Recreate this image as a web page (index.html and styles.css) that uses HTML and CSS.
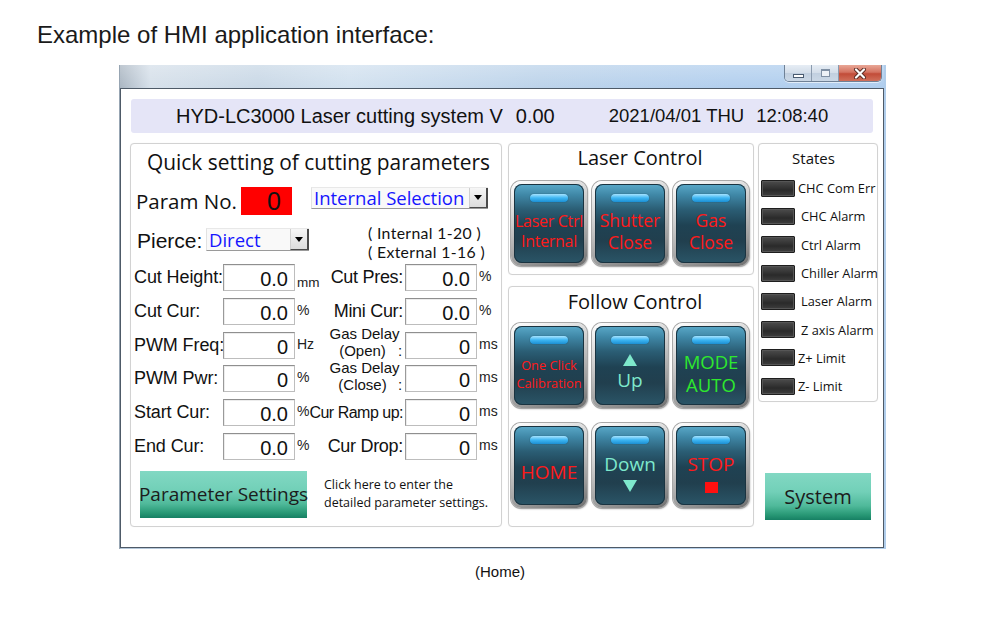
FILE: index.html
```html
<!DOCTYPE html>
<html>
<head>
<meta charset="utf-8">
<title>HMI</title>
<link rel="stylesheet" href="styles.css">
</head>
<body>
<h1 class="page-title">Example of HMI application interface:</h1>
<div class="window">
  <div class="titlebar">
    <div class="wctrls">
      <span class="wbtn wmin"><i></i></span>
      <span class="wbtn wmax"><i></i></span>
      <span class="wbtn wclose"><svg width="14" height="11" viewBox="0 0 14 11"><path d="M3 1.5 L11 9.5 M11 1.5 L3 9.5" stroke="#5a2a22" stroke-width="4" stroke-linecap="round"/><path d="M3 1.5 L11 9.5 M11 1.5 L3 9.5" stroke="#ffffff" stroke-width="2.2" stroke-linecap="round"/></svg></span>
    </div>
  </div>
  <div class="client">
    <div class="header">
      <span class="h-title">HYD-LC3000 Laser cutting system V</span>
      <span class="h-ver">0.00</span>
      <span class="h-date">2021/04/01 THU</span>
      <span class="h-time">12:08:40</span>
    </div>
    <div class="main">
      <section class="panel quick">
        <div class="q-title">Quick setting of cutting parameters</div>
        <div class="q-param">
          <span class="q-plabel">Param No.</span>
          <span class="redbox">0</span>
          <span class="combo combo-sel"><span class="combo-text">Internal Selection</span><span class="combo-btn"><i></i></span></span>
        </div>
        <div class="q-pierce">
          <span class="pierce-label">Pierce:</span>
          <span class="combo combo-direct"><span class="combo-text">Direct</span><span class="combo-btn"><i></i></span></span>
          <span class="range"><span class="rline">( Internal 1-20 )</span><span class="rline">( External 1-16 )</span></span>
        </div>
        <div class="q-grid">
          <span class="lbl">Cut Height:</span><span class="val">0.0</span><span class="unit unit-low">mm</span>
          <span class="lbl2"><span>Cut Pres:</span></span><span class="val">0.0</span><span class="unit">%</span>

          <span class="lbl">Cut Cur:</span><span class="val">0.0</span><span class="unit">%</span>
          <span class="lbl2"><span>Mini Cur:</span></span><span class="val">0.0</span><span class="unit">%</span>

          <span class="lbl">PWM Freq:</span><span class="val">0</span><span class="unit">Hz</span>
          <span class="lbl2 two"><span class="l1">Gas Delay</span><span class="l2"><span class="sub">(Open)</span><span class="colon">:</span></span></span><span class="val">0</span><span class="unit">ms</span>

          <span class="lbl">PWM Pwr:</span><span class="val">0</span><span class="unit">%</span>
          <span class="lbl2 two"><span class="l1">Gas Delay</span><span class="l2"><span class="sub">(Close)</span><span class="colon">:</span></span></span><span class="val">0</span><span class="unit">ms</span>

          <span class="lbl">Start Cur:</span><span class="val">0.0</span><span class="unit">%</span>
          <span class="lbl2 tight"><span>Cur Ramp up:</span></span><span class="val">0</span><span class="unit">ms</span>

          <span class="lbl">End Cur:</span><span class="val">0.0</span><span class="unit">%</span>
          <span class="lbl2"><span>Cur Drop:</span></span><span class="val">0</span><span class="unit">ms</span>
        </div>
        <div class="q-bottom">
          <div class="gbtn param-btn">Parameter Settings</div>
          <p class="hint">Click here to enter the<br>detailed parameter settings.</p>
        </div>
      </section>

      <div class="mid">
        <section class="panel laser">
          <div class="ptitle laser-title">Laser Control</div>
          <div class="btnrow">
            <div class="hbtn"><div class="face"><span class="pill"></span><span class="btxt red t16"><span>Laser Ctrl</span><span>Internal</span></span></div></div>
            <div class="hbtn"><div class="face"><span class="pill"></span><span class="btxt red t17"><span>Shutter</span><span>Close</span></span></div></div>
            <div class="hbtn"><div class="face"><span class="pill"></span><span class="btxt red t17"><span>Gas</span><span>Close</span></span></div></div>
          </div>
        </section>
        <section class="panel follow">
          <div class="ptitle follow-title">Follow Control</div>
          <div class="btnrow">
            <div class="hbtn"><div class="face"><span class="pill"></span><span class="btxt red t12"><span>One Click</span><span>Calibration</span></span></div></div>
            <div class="hbtn"><div class="face"><span class="pill"></span><span class="btxt cyan t19"><span class="tri-up"></span><span>Up</span></span></div></div>
            <div class="hbtn"><div class="face"><span class="pill"></span><span class="btxt green t18"><span>MODE</span><span>AUTO</span></span></div></div>
          </div>
          <div class="btnrow row2">
            <div class="hbtn"><div class="face"><span class="pill"></span><span class="btxt red t19"><span>HOME</span></span></div></div>
            <div class="hbtn"><div class="face"><span class="pill"></span><span class="btxt cyan t19"><span>Down</span><span class="tri-down"></span></span></div></div>
            <div class="hbtn"><div class="face"><span class="pill"></span><span class="btxt red t19"><span>STOP</span><span class="sq"></span></span></div></div>
          </div>
        </section>
      </div>

      <div class="right">
        <section class="panel states">
          <div class="st-title">States</div>
          <div class="st-list">
            <div class="st-row"><span class="led"></span><span>CHC Com Err</span></div>
            <div class="st-row"><span class="led"></span><span class="st-in">CHC Alarm</span></div>
            <div class="st-row"><span class="led"></span><span class="st-in">Ctrl Alarm</span></div>
            <div class="st-row"><span class="led"></span><span class="st-in">Chiller Alarm</span></div>
            <div class="st-row"><span class="led"></span><span class="st-in">Laser Alarm</span></div>
            <div class="st-row"><span class="led"></span><span class="st-in">Z axis Alarm</span></div>
            <div class="st-row"><span class="led"></span><span>Z+ Limit</span></div>
            <div class="st-row"><span class="led"></span><span>Z- Limit</span></div>
          </div>
        </section>
        <div class="gbtn sys-btn">System</div>
      </div>
    </div>
  </div>
</div>
<p class="caption">(Home)</p>
</body>
</html>
```
FILE: styles.css
```css
html, body {
  margin: 0;
  padding: 0;
  background: #ffffff;
}
body {
  width: 1000px;
  height: 629px;
  overflow: hidden;
  font-family: "Liberation Sans", Arial, sans-serif;
  color: #111;
}
.page-title {
  margin: 0;
  padding: 21px 0 0 37px;
  font: 400 24px/28px "Liberation Sans", Arial, sans-serif;
  color: #1a1a1a;
}

/* window */
.window {
  margin: 16px 0 0 119px;
  width: 767px;
  height: 484px;
  box-sizing: border-box;
  padding: 0 2px 1px 1px;
  display: flex;
  flex-direction: column;
  background: linear-gradient(90deg, #8d9aa6 0, #b4c6d8 2px, #c4d6e8 30%, #b0cdeb 100%);
}
.titlebar {
  height: 23px;
  flex: none;
  display: flex;
  justify-content: flex-end;
  padding-right: 2px;
  background:
    linear-gradient(180deg, rgba(255,255,255,0.25) 0%, rgba(255,255,255,0) 100%),
    linear-gradient(90deg, #aab6c2 0%, #d6e0ea 4%, #c9d8e6 18%, #d2e1ef 30%, #bcd3ea 55%, #b2cfee 80%, #aecdee 100%);
}
.wctrls {
  display: flex;
  height: 16px;
  border: 1px solid #6f8196;
  border-top: none;
  border-radius: 0 0 5px 5px;
  overflow: hidden;
  box-shadow: 0 1px 0 rgba(255,255,255,0.6);
}
.wbtn {
  display: flex;
  align-items: center;
  justify-content: center;
  height: 16px;
}
.wmin, .wmax {
  width: 26px;
  background: linear-gradient(180deg, #e6edf5 0%, #d3dde9 50%, #c1cfdf 51%, #cbd8e6 100%);
  border-right: 1px solid #8b9bae;
}
.wmin i {
  display: block;
  width: 9px;
  height: 2px;
  margin-top: 6px;
  background: #fff;
  border: 1px solid #4a5b70;
}
.wmax i {
  display: block;
  width: 7px;
  height: 5px;
  border: 1px solid #8090a4;
  border-top-width: 2px;
  background: #eef2f7;
}
.wclose {
  width: 42px;
  background: linear-gradient(180deg, #e9a797 0%, #d47361 45%, #c24c38 55%, #d0705b 100%);
}

.client {
  flex: 1;
  background: #ffffff;
  border: 1px solid #4e5a67;
  padding: 10px 0 0 9px;
  box-sizing: border-box;
}
.header {
  margin-left: 1px;
  width: 742px;
  height: 34px;
  box-sizing: border-box;
  background: #e5e5f7;
  border-radius: 3px;
  display: flex;
  align-items: center;
  padding-left: 45px;
  font: 20px/24px "Liberation Sans", Arial, sans-serif;
  color: #111;
  white-space: nowrap;
}
.h-ver { margin-left: 13px; }
.h-date { margin-left: 54px; font-size: 18.5px; }
.h-time { margin-left: 12px; font-size: 18.5px; }

.main {
  display: flex;
  align-items: flex-start;
  margin-top: 10px;
}
.panel {
  box-sizing: border-box;
  background: #fff;
  border: 1px solid #d2d2d2;
  border-radius: 4px;
  box-shadow: 0 0 1px rgba(0,0,0,0.08);
}

/* quick settings panel */
.quick {
  width: 372px;
  height: 384px;
}
.q-title {
  margin-top: 5px;
  padding-left: 16px;
  font: 20.9px/26px "Open Sans", sans-serif;
  color: #111;
  white-space: nowrap;
}
.q-param {
  display: flex;
  align-items: center;
  height: 28px;
  margin-top: 12px;
  padding-left: 5px;
}
.q-plabel {
  width: 105px;
  font: 20.5px/28px "Open Sans", sans-serif;
  color: #111;
}
.redbox {
  width: 51px;
  height: 28px;
  box-sizing: border-box;
  background: #ff0000;
  text-align: right;
  padding-right: 11px;
  font: 25px/29px "Liberation Sans", Arial, sans-serif;
  color: #111;
}
.combo {
  display: flex;
  box-sizing: border-box;
  background: #f9f9f9;
  border-top: 1px solid #e8e8e8;
  border-bottom: 1px solid #9a9a9a;
  border-left: 1px solid #e2e2e2;
}
.combo-text {
  flex: 1;
  padding-left: 2px;
  font: 18.5px/20px "Open Sans", sans-serif;
  color: #1515ff;
  white-space: nowrap;
}
.combo-btn {
  width: 19px;
  flex: none;
  box-sizing: border-box;
  display: flex;
  align-items: center;
  justify-content: center;
  background: linear-gradient(180deg, #f6f6f6, #dcdcdc);
  border-left: 1px solid #cfcfcf;
  border-right: 2px solid #4a4a4a;
  border-bottom: 1px solid #4a4a4a;
}
.combo-btn i {
  display: block;
  width: 0;
  height: 0;
  border-left: 4px solid transparent;
  border-right: 4px solid transparent;
  border-top: 5px solid #000;
}
.combo-sel {
  margin-left: 19px;
  width: 177px;
  height: 22px;
  align-self: flex-start;
}
.q-pierce {
  display: flex;
  align-items: flex-start;
  height: 38px;
  margin-top: 8px;
  padding-left: 6px;
}
.pierce-label {
  width: 69px;
  margin-top: 6px;
  font: 21px/24px "Liberation Sans", Arial, sans-serif;
  color: #111;
}
.combo-direct {
  width: 103px;
  height: 23px;
  margin-top: 5px;
}
.combo-direct .combo-text { line-height: 21px; }
.range {
  margin-left: 59px;
  display: flex;
  flex-direction: column;
  font: 15.8px/19px Lato, "Open Sans", sans-serif;
  letter-spacing: 0.35px;
  color: #111;
  white-space: nowrap;
}
.rline { display: block; height: 19px; }

.q-grid {
  margin-top: 3px;
  padding-left: 1px;
  display: grid;
  grid-template-columns: 91px 72px 24px 86px 72px 22px;
  grid-auto-rows: 27px;
  row-gap: 6.8px;
}
.lbl, .lbl2 {
  font: 18px/27px "Liberation Sans", Arial, sans-serif;
  color: #111;
  white-space: nowrap;
}
.lbl { padding-left: 2px; letter-spacing: -0.1px; }
.lbl2 {
  display: flex;
  justify-content: flex-end;
  padding-right: 2px;
  letter-spacing: -0.3px;
}
.lbl2.tight {
  font-size: 16px;
  letter-spacing: -0.5px;
}
.lbl2.two {
  flex-direction: column;
  justify-content: flex-start;
  align-self: center;
  margin-top: -6px;
  font-size: 15px;
  line-height: 17px;
  letter-spacing: 0;
  padding-left: 8px;
  padding-right: 3px;
}
.two .l1 { text-align: center; }
.two .l2 { display: flex; }
.two .sub { flex: 1; text-align: center; }
.two .colon { width: 4px; text-align: right; }
.val {
  box-sizing: border-box;
  background: #fff;
  border: 1px solid #bdbdbd;
  border-top-color: #8f8f8f;
  border-left-color: #9a9a9a;
  box-shadow: inset 1px 1px 0 #ececec;
  text-align: right;
  padding-right: 6px;
  font: 20px/28px "Liberation Sans", Arial, sans-serif;
  color: #111;
}
.unit {
  padding-left: 2px;
  font: 14px/16px "Liberation Sans", Arial, sans-serif;
  color: #222;
  padding-top: 4px;
}
.unit-low {
  padding-top: 11px;
  font-size: 13.5px;
}

.q-bottom {
  display: flex;
  align-items: center;
  margin-top: 11px;
  padding-left: 9px;
}
.gbtn {
  box-sizing: border-box;
  display: flex;
  align-items: center;
  justify-content: center;
  background: linear-gradient(180deg, #82d8c3 0%, #72d0b8 40%, #4fb99a 70%, #2a9a77 88%, #168063 100%);
  color: #1c1c1c;
  font-family: "Open Sans", sans-serif;
  white-space: nowrap;
}
.param-btn {
  width: 167px;
  height: 47px;
  font-size: 19px;
}
.hint {
  margin: 0 0 0 17px;
  font: 12.5px/18px "Open Sans", sans-serif;
  color: #111;
  white-space: nowrap;
}

/* middle column */
.mid {
  margin-left: 6px;
  width: 246px;
  display: flex;
  flex-direction: column;
  gap: 11px;
}
.laser { height: 132px; }
.follow { height: 241px; }
.ptitle {
  font: 20px/26px "Open Sans", sans-serif;
  color: #111;
  text-align: center;
}
.laser-title { margin-top: 1px; padding-left: 18px; }
.follow-title { margin-top: 2px; padding-left: 8px; }
.btnrow {
  display: flex;
  gap: 5px;
  padding-left: 2px;
  margin-top: 10px;
}
.follow .btnrow { margin-top: 8px; }
.follow .row2 { margin-top: 15px; }
.hbtn {
  width: 76px;
  height: 85px;
  box-sizing: border-box;
  padding: 3px;
  border-radius: 10px;
  background: linear-gradient(160deg, #ffffff 0%, #d2d2d2 35%, #9c9c9c 75%, #6e6e6e 100%);
  box-shadow: 0 0 0 1px #a8a8a8, 1px 1px 2px rgba(0,0,0,0.35);
}
.face {
  height: 100%;
  box-sizing: border-box;
  border-radius: 8px;
  background: linear-gradient(180deg, #5aa9c9 0%, #3f87a6 14%, #2b5e75 32%, #1f4253 52%, #213f4e 72%, #2a5567 100%);
  box-shadow: inset 0 0 0 1px #1a3340;
  display: flex;
  flex-direction: column;
  align-items: center;
}
.pill {
  flex: none;
  width: 38px;
  height: 8px;
  margin-top: 10px;
  border-radius: 4px;
  background: linear-gradient(180deg, #a6e3ff 0%, #3db5f2 50%, #1c8fd3 100%);
  box-shadow: 0 0 1px #083650;
}
.btxt {
  flex: 1;
  display: flex;
  flex-direction: column;
  align-items: center;
  justify-content: center;
  padding-bottom: 4px;
  font-family: "Open Sans", sans-serif;
  white-space: nowrap;
}
.red { color: #ff1a1a; }
.cyan { color: #7ee8cc; }
.green { color: #2ee82e; }
.t16 { font-size: 16px; line-height: 20px; letter-spacing: -0.3px; }
.t17 { font-size: 17.5px; line-height: 22px; }
.t12 { font-size: 12.8px; line-height: 18px; padding-top: 2px; }
.t18 { font-size: 18.5px; line-height: 23px; }
.t19 { font-size: 19px; line-height: 23px; }
.tri-up, .tri-down {
  display: block;
  width: 0;
  height: 0;
  border-left: 7px solid transparent;
  border-right: 7px solid transparent;
}
.tri-up {
  border-bottom: 12px solid #7ee8cc;
  margin-bottom: 3px;
}
.tri-down {
  border-top: 12px solid #7ee8cc;
  margin-top: 4px;
}
.sq {
  display: block;
  width: 13px;
  height: 11px;
  margin-top: 6px;
  background: #ff1010;
}

/* right column */
.right {
  margin-left: 4px;
  width: 120px;
}
.states { height: 259px; }
.st-title {
  margin-top: 4px;
  padding-right: 9px;
  text-align: center;
  font: 15px/20px "Open Sans", sans-serif;
  color: #111;
}
.st-list {
  margin-top: 6px;
  padding-left: 2px;
}
.st-row {
  display: flex;
  align-items: center;
  height: 28.3px;
  gap: 3px;
  font: 12.8px/16px "Open Sans", sans-serif;
  color: #111;
  white-space: nowrap;
}
.st-in { padding-left: 3px; }
.led {
  flex: none;
  width: 34px;
  height: 17px;
  box-sizing: border-box;
  border: 1px solid #1e1e1e;
  border-radius: 1px;
  background: linear-gradient(180deg, #4c4c4c 0%, #333 45%, #2a2a2a 60%, #3e3e3e 100%);
  box-shadow: inset 0 0 0 1px #565656;
}
.sys-btn {
  margin: 71px 0 0 7px;
  width: 106px;
  height: 47px;
  font-size: 20px;
}

.caption {
  margin: 14px 0 0;
  text-align: center;
  font: 15px/18px "Liberation Sans", Arial, sans-serif;
  color: #111;
}
```
